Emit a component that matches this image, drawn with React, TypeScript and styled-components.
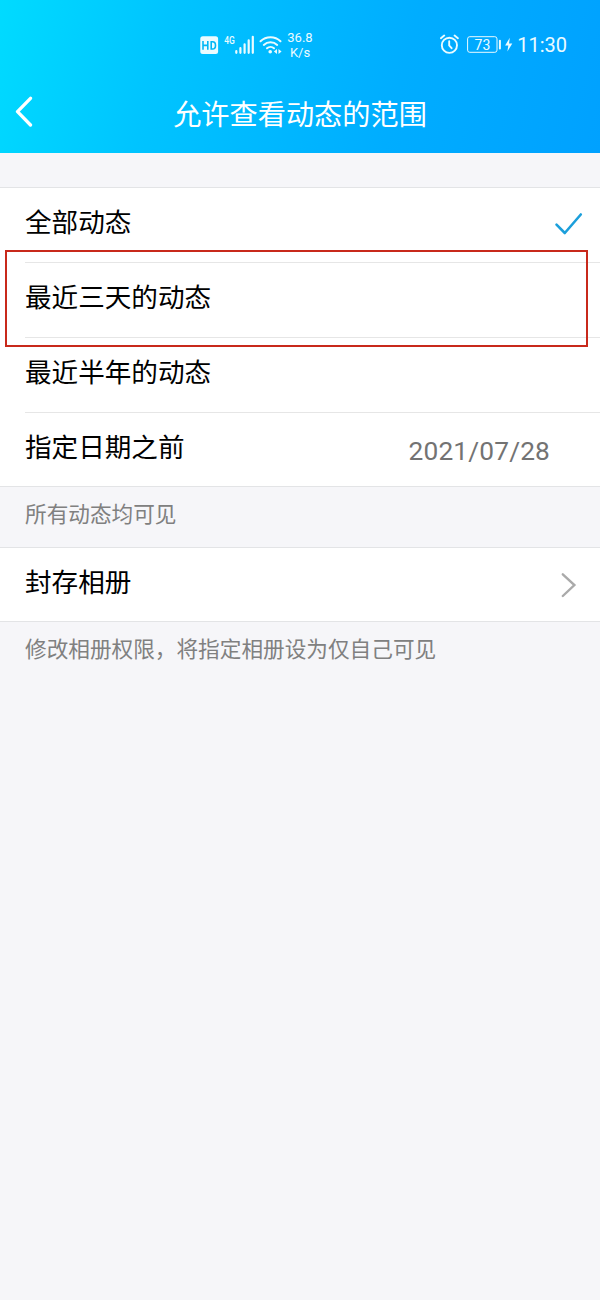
import React from 'react';
import styled, { createGlobalStyle } from 'styled-components';

const GlobalStyle = createGlobalStyle`
  * { box-sizing: border-box; }
  body { margin: 0; background: #f6f6f9; }
`;

const Screen = styled.main`
  position: relative;
  width: 600px;
  height: 1300px;
  overflow: hidden;
  background: #f6f6f9;
  color: #000;
  font-family: Roboto, 'Noto Sans CJK SC', sans-serif;
`;

const Header = styled.header`
  height: 153px;
  background: linear-gradient(104deg, #00dbff 0%, #00c4ff 27%, #00adff 66%, #00a1ff 100%);
  color: #fff;
`;

const StatusBar = styled.div`
  display: flex;
  align-items: center;
  justify-content: space-between;
  height: 72px;
  padding: 17px 33px 0 199px;
`;

const StatusGroup = styled.div`
  display: flex;
  align-items: center;
  color: #ebfbff;
`;

const Speed = styled.div`
  width: 30px;
  font-size: 13px;
  line-height: 15px;
  text-align: center;
`;

const Power = styled.div`
  display: flex;
  margin: 0 4px 0 6px;
`;

const Clock = styled.time`
  font-size: 20px;
  line-height: 24px;
`;

const NavBar = styled.div`
  display: grid;
  grid-template-columns: 60px 1fr 60px;
  align-items: center;
  height: 81px;
`;

const BackButton = styled.button`
  display: flex;
  height: 81px;
  padding: 23px 0 0 14px;
  border: 0;
  background: none;
  color: #fff;
`;

const Title = styled.h1`
  margin: 0;
  padding-top: 7px;
  font-size: 28.2px;
  font-weight: 400;
  line-height: 40px;
  text-align: center;
  white-space: nowrap;
`;

const Group = styled.section<{ $top?: number }>`
  margin-top: ${({ $top = 0 }) => $top}px;
  border-top: 1px solid #e3e4e6;
  border-bottom: 1px solid #e3e4e6;
  background: #fff;
`;

const Row = styled.div<{ $divided?: boolean }>`
  display: flex;
  justify-content: space-between;
  height: ${({ $divided }) => ($divided ? 75 : 73)}px;
  margin-left: 25px;
  border-bottom: ${({ $divided }) => ($divided ? '1px solid #e6e6e6' : '0')};
`;

const Label = styled.span`
  padding-top: 15px;
  font-size: 26.6px;
  line-height: 40px;
`;

const DateValue = styled.span`
  padding: 18px 50px 0 0;
  color: #737373;
  font-size: 26.3px;
  line-height: 40px;
  letter-spacing: 0.15px;
`;

const Note = styled.p`
  height: 60px;
  margin: 0;
  padding: 12px 25px 0;
  color: #808080;
  font-size: 21.65px;
  line-height: 32px;
  white-space: nowrap;
`;

const Accessory = styled.span<{ $right: number }>`
  padding: 23px ${({ $right }) => $right}px 0 0;
  line-height: 0;
`;

const Highlight = styled.div`
  position: absolute;
  top: 250px;
  left: 5px;
  width: 583px;
  height: 97px;
  border: 2px solid #c8291b;
  pointer-events: none;
`;

const NetworkIcons = () => (
  <svg width="86" height="24" viewBox="199 32 86 24" fill="none">
    <rect x="200.3" y="35.3" width="17.8" height="17.8" rx="2.5" fill="#ebfbff" />
    <path d="M203 40v8.8M203 44.4h4.6M207.8 40v8.8M211.2 40.8v7.2h1.3q3 0 3-3.6t-3-3.6z" stroke="#00b7f5" strokeWidth="1.6" />
    <text x="224.3" y="43" fill="#ebfbff" fontFamily="Roboto" fontSize="11" fontWeight="500" textLength="10.6" lengthAdjust="spacingAndGlyphs">4G</text>
    <path d="M236.3 50.2v1.6M240.4 47.2v4.6M244.6 43.3v8.5M248.7 39.4v12.4M252.8 35.8v16" stroke="#ebfbff" strokeWidth="2.2" strokeLinecap="round" />
    <path d="M260.5 40.2a14.5 14.5 0 0 1 20 0M263.8 43.9a9.8 9.8 0 0 1 13.4 0M267 47.3a5.2 5.2 0 0 1 7 0" stroke="#ebfbff" strokeWidth="2" strokeLinecap="round" />
    <circle cx="270.2" cy="50.7" r="1.8" fill="#ebfbff" />
    <path d="M277 48v5l-3.1-2.5zM278.5 48v5l3.1-2.5z" fill="#ebfbff" />
  </svg>
);

const AlarmIcon = () => (
  <svg width="20" height="22" viewBox="440 34 20 22" fill="none" stroke="#ebfbff" strokeWidth="1.9" strokeLinecap="round">
    <circle cx="449.4" cy="45.3" r="7.6" />
    <path d="M449.2 41.3v4.2l2.4 2.7M440.9 38.2l3.3-2.6M457.9 38.2l-3.3-2.6" />
  </svg>
);

const BatteryIcon = () => (
  <svg width="47" height="22" viewBox="466 34 47 22" fill="none">
    <rect x="467.6" y="36.7" width="29.4" height="15.6" rx="2.2" stroke="#ebfbff" strokeWidth="1" />
    <text x="482.4" y="49.6" fill="#ebfbff" fontFamily="Roboto" fontSize="14" textAnchor="middle">73</text>
    <path d="M499.9 40.8v7.6" stroke="#ebfbff" strokeWidth="2" strokeLinecap="round" />
    <path d="M509.8 37.8l-4.7 7.6h3.2l-.9 6.2 4.9-8.1H509z" fill="#ebfbff" />
  </svg>
);

const BackIcon = () => (
  <svg width="20" height="32" viewBox="14 95 20 32" fill="none" stroke="currentColor" strokeWidth="3.3" strokeLinecap="round" strokeLinejoin="round">
    <path d="M30.5 98.3L17.5 111.7L30.5 125" />
  </svg>
);

const CheckIcon = () => (
  <svg width="30" height="26" viewBox="553 211 30 26" fill="none" stroke="#1b9fdb" strokeWidth="2.6" strokeLinecap="round" strokeLinejoin="round">
    <path d="M556.5 224.6L564.8 233L580.8 214.5" />
  </svg>
);

const ChevronIcon = () => (
  <svg width="16" height="28" viewBox="561 571 16 28" fill="none" stroke="#aaa" strokeWidth="2.4" strokeLinecap="round" strokeLinejoin="miter">
    <path d="M562.8 574.3L574.4 585L562.8 596" />
  </svg>
);

export default function App() {
  return (
    <>
      <GlobalStyle />
      <Screen>
        <Header>
          <StatusBar>
            <StatusGroup>
              <NetworkIcons />
              <Speed>36.8<br />K/s</Speed>
            </StatusGroup>
            <StatusGroup>
              <AlarmIcon />
              <Power><BatteryIcon /></Power>
              <Clock>11:30</Clock>
            </StatusGroup>
          </StatusBar>
          <NavBar>
            <BackButton aria-label="返回"><BackIcon /></BackButton>
            <Title>允许查看动态的范围</Title>
          </NavBar>
        </Header>
        <Group $top={34}>
          <Row $divided>
            <Label>全部动态</Label>
            <Accessory $right={17}><CheckIcon /></Accessory>
          </Row>
          <Row $divided><Label>最近三天的动态</Label></Row>
          <Row $divided><Label>最近半年的动态</Label></Row>
          <Row>
            <Label>指定日期之前</Label>
            <DateValue>2021/07/28</DateValue>
          </Row>
        </Group>
        <Note>所有动态均可见</Note>
        <Group>
          <Row>
            <Label>封存相册</Label>
            <Accessory $right={23}><ChevronIcon /></Accessory>
          </Row>
        </Group>
        <Note>修改相册权限，将指定相册设为仅自己可见</Note>
        <Highlight />
      </Screen>
    </>
  );
}
